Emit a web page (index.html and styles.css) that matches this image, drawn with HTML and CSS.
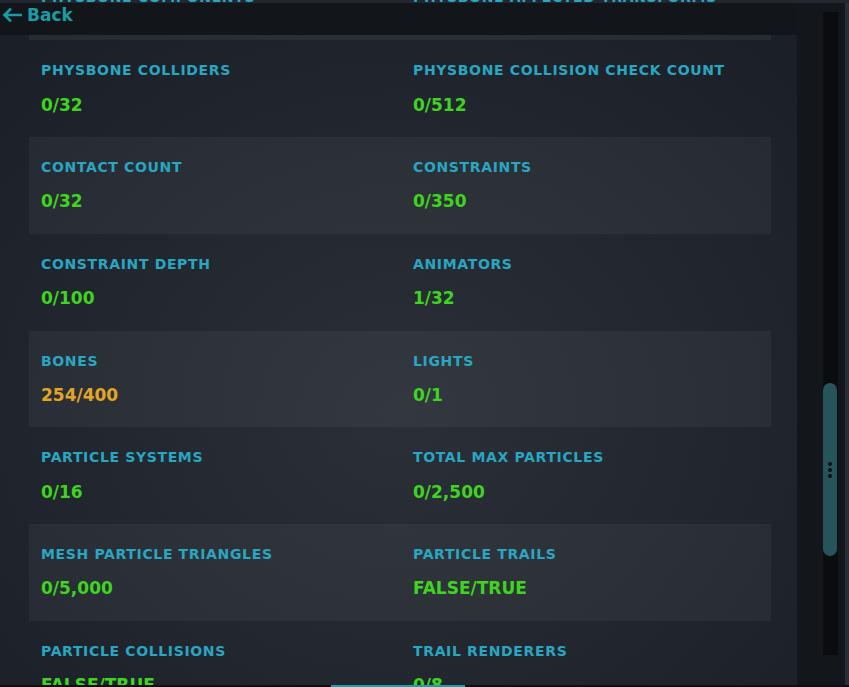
FILE: index.html
```html
<!DOCTYPE html>
<html>
<head>
<meta charset="utf-8">
<link rel="stylesheet" href="styles.css">
</head>
<body>
<div class="window">
  <div class="topclip">
    <div class="clipgrid">
      <div class="label">PHYSBONE COMPONENTS</div>
      <div class="label">PHYSBONE AFFECTED TRANSFORMS</div>
    </div>
  </div>
  <div class="main">
    <div class="leftcol">
      <div class="header">
        <svg class="arrow" width="20" height="14" viewBox="0 0 20 14">
          <path d="M19 7H2.5M8 1.5L2.5 7L8 12.5" fill="none" stroke="#1b9ca3" stroke-width="2.6" stroke-linecap="square"/>
        </svg>
        <span class="back">Back</span>
      </div>
      <div class="panel">
        <div class="cutband"></div>
        <div class="row">
          <div class="cell"><div class="label">PHYSBONE COLLIDERS</div><div class="value">0/32</div></div>
          <div class="cell"><div class="label">PHYSBONE COLLISION CHECK COUNT</div><div class="value">0/512</div></div>
        </div>
        <div class="row band">
          <div class="cell"><div class="label">CONTACT COUNT</div><div class="value">0/32</div></div>
          <div class="cell"><div class="label">CONSTRAINTS</div><div class="value">0/350</div></div>
        </div>
        <div class="row">
          <div class="cell"><div class="label">CONSTRAINT DEPTH</div><div class="value">0/100</div></div>
          <div class="cell"><div class="label">ANIMATORS</div><div class="value">1/32</div></div>
        </div>
        <div class="row band">
          <div class="cell"><div class="label">BONES</div><div class="value warn">254/400</div></div>
          <div class="cell"><div class="label">LIGHTS</div><div class="value">0/1</div></div>
        </div>
        <div class="row">
          <div class="cell"><div class="label">PARTICLE SYSTEMS</div><div class="value">0/16</div></div>
          <div class="cell"><div class="label">TOTAL MAX PARTICLES</div><div class="value">0/2,500</div></div>
        </div>
        <div class="row band">
          <div class="cell"><div class="label">MESH PARTICLE TRIANGLES</div><div class="value">0/5,000</div></div>
          <div class="cell"><div class="label">PARTICLE TRAILS</div><div class="value">FALSE/TRUE</div></div>
        </div>
        <div class="row">
          <div class="cell"><div class="label">PARTICLE COLLISIONS</div><div class="value">FALSE/TRUE</div></div>
          <div class="cell"><div class="label">TRAIL RENDERERS</div><div class="value">0/8</div></div>
        </div>
      </div>
    </div>
    <div class="gutter">
      <div class="track">
        <div class="thumb">
          <span class="dot"></span><span class="dot"></span><span class="dot"></span>
        </div>
      </div>
    </div>
    <div class="edge"></div>
  </div>
  <div class="bottombar"><div class="seg"></div></div>
</div>
</body>
</html>
```

FILE: styles.css
```css
* { box-sizing: border-box; }
html, body { margin: 0; padding: 0; }
body {
  width: 849px;
  height: 687px;
  overflow: hidden;
  background: #12151a;
  font-family: "DejaVu Sans", Verdana, sans-serif;
  font-weight: bold;
}
.window {
  width: 849px;
  height: 687px;
  display: flex;
  flex-direction: column;
}
.topclip {
  height: 3px;
  overflow: hidden;
  background: #22272f;
  flex: none;
}
.clipgrid {
  display: grid;
  grid-template-columns: 372px 372px;
  padding-left: 41px;
  margin-top: -11px;
}
.main {
  flex: 1;
  display: flex;
  min-height: 0;
}
.leftcol {
  width: 797px;
  display: flex;
  flex-direction: column;
  min-height: 0;
}
.header {
  height: 32px;
  flex: none;
  background: #121519;
  display: flex;
  align-items: flex-start;
  padding: 2px 0 0 2px;
  gap: 5px;
}
.arrow { margin-top: 3px; }
.back {
  color: #1b9ca3;
  font-size: 17px;
  line-height: 20px;
}
.panel {
  flex: 1;
  overflow: hidden;
  background: radial-gradient(ellipse 70% 75% at 50% 58%, #2a2f38 0%, #232830 50%, #1b2028 100%);
  padding: 0 26px 0 29px;
}
.cutband {
  height: 5.25px;
  background: rgba(255,255,255,0.05);
}
.row {
  height: 96.75px;
  display: grid;
  grid-template-columns: 372px 1fr;
  padding: 22px 0 0 12px;
}
.band { background: rgba(255,255,255,0.045); }
.label {
  color: #29a6c1;
  font-size: 14px;
  line-height: 16.8px;
  letter-spacing: 0.65px;
  white-space: nowrap;
}
.value {
  color: #3fd41f;
  font-size: 17px;
  line-height: 20.4px;
  margin-top: 15.5px;
  white-space: nowrap;
}
.value.warn { color: #e3a526; }
.gutter {
  width: 48px;
  background: #13171b;
  padding: 9px 7px 0 26px;
}
.track {
  width: 15px;
  height: 643px;
  background: #0a0c0f;
  padding-top: 371px;
}
.thumb {
  width: 14px;
  height: 173px;
  background: #27545a;
  border-radius: 7px;
  display: flex;
  flex-direction: column;
  align-items: center;
  justify-content: center;
  gap: 2px;
}
.dot {
  width: 4px;
  height: 4px;
  border-radius: 50%;
  background: #0b0f12;
}
.edge {
  width: 4px;
  background: #2a2e38;
}
.bottombar {
  height: 2px;
  flex: none;
  background: #0d0f12;
  padding-left: 331px;
}
.seg {
  width: 134px;
  height: 2px;
  background: #1aa0a8;
}
```
